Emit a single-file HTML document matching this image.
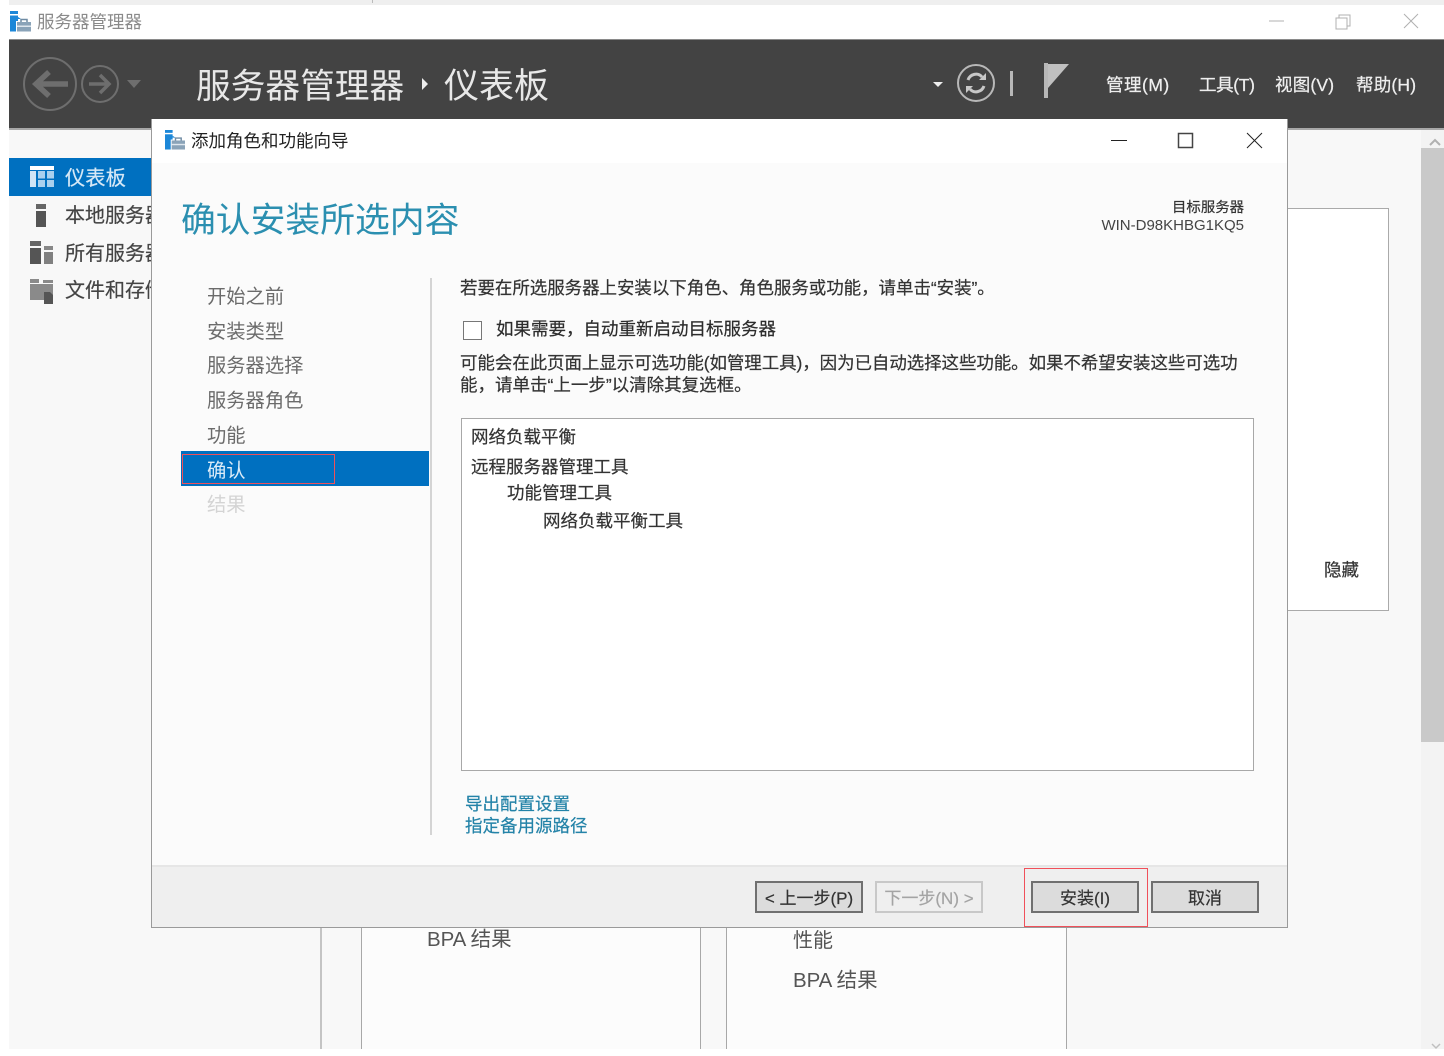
<!DOCTYPE html>
<html lang="zh"><head><meta charset="utf-8"><title>服务器管理器</title>
<style>
html,body{margin:0;padding:0;background:#fff}
#p{position:relative;width:1444px;height:1056px;overflow:hidden;background:#fff;font-family:"Liberation Sans","Noto Sans CJK SC",sans-serif;filter:blur(.35px)}
.b{position:absolute}
.t{position:absolute;white-space:nowrap;height:24px;line-height:24px;font-size:17.5px;color:#333}
.s{-webkit-text-stroke:.2px currentColor}
.n{color:#6b6b6b;font-size:19.3px;left:207px}
.k{letter-spacing:.2px;-webkit-text-stroke:.25px currentColor}
.v{position:absolute;width:1px;background:#a8a8a8;top:928px;height:121px}
.btn{position:absolute;top:881px;width:104px;height:28px;border:2px solid #707070;background:#dcdcdc;text-align:center;line-height:31px;font-size:17px;color:#333;white-space:nowrap;-webkit-text-stroke:.2px currentColor}
svg{position:absolute;overflow:visible}
</style></head><body><div id="p">
<div class="b" style="left:9px;top:0;width:1435px;height:5px;background:#efefef"></div>
<div class="b" style="left:372px;top:0;width:1px;height:3px;background:#bbb"></div>

<svg style="left:10px;top:11px" width="21" height="21" viewBox="0 0 21 21"><rect x="0" y="0" width="8" height="3" fill="#1c87d8"/><rect x="0" y="4.500" width="8" height="16" fill="#1c87d8"/><path d="M8 6l3 2h-3z" fill="#1c87d8"/><rect x="6" y="10" width="15" height="11" fill="#fff"/><rect x="7" y="11" width="14" height="9.500" fill="#8aa3b8"/><path d="M11 11V8.500h6V11" fill="none" stroke="#6f8ba3" stroke-width="1.500"/><rect x="7" y="14.500" width="14" height="1.500" fill="#dfe7ee"/></svg>
<div class="t" style="left:37px;top:10px;color:#8a8a8a">服务器管理器</div>
<svg style="left:1269px;top:13px" width="150" height="18" fill="none" stroke="#b0b0b0"><path d="M0 8h15"/><path d="M67 5h11v11H67zM70 5V2h11v11h-3"/><path d="M135 1l14 14M149 1l-14 14"/></svg>

<div class="b" style="left:9px;top:39px;width:1435px;height:89px;background:#434343;border-top:1px solid #8a8a8a;box-sizing:border-box"></div>
<div class="b" style="left:9px;top:128px;width:1435px;height:2px;background:#a8a8a8"></div>
<div class="b" style="left:9px;top:130px;width:1435px;height:919px;background:#f8f8f8"></div>

<svg style="left:23px;top:57px" width="120" height="55" fill="none" stroke="#6e6e6e"><circle cx="27" cy="27" r="26" stroke-width="2"/><path d="M26 15L13 27l13 12M14 27h31" stroke-width="5.500"/><circle cx="77" cy="27" r="18" stroke-width="2"/><path d="M77 18l9 9-9 9M66 27h19" stroke-width="3.500"/><path d="M104 23h14l-7 8z" fill="#6e6e6e" stroke="none"/></svg>
<div class="t" style="left:196px;top:64px;height:46px;line-height:46px;font-size:34.700px;color:#e8e8e8">服务器管理器</div>
<svg style="left:421px;top:78px" width="8" height="12"><path d="M1 0l6 6-6 6z" fill="#eee"/></svg>
<div class="t" style="left:444px;top:64px;height:46px;line-height:46px;font-size:35px;color:#e8e8e8">仪表板</div>
<svg style="left:933px;top:62px" width="140" height="40" fill="none"><path d="M0 20h10l-5 5z" fill="#eee"/><circle cx="43" cy="21" r="18" stroke="#b8b8b8" stroke-width="2"/><path d="M35 18c2-6 10-8 14-3M51 24c-2 6-10 8-14 3" stroke="#c8c8c8" stroke-width="3"/><path d="M46 18l7 0 0-7zM40 24l-7 0 0 7z" fill="#c8c8c8"/><rect x="77" y="9" width="3" height="25" fill="#b8b8b8"/><rect x="111" y="1" width="4" height="35" fill="#b8b8b8"/><path d="M115 2h21l-21 24z" fill="#c0c0c0"/></svg>
<div class="t k" style="left:1106px;top:73px;color:#eee;letter-spacing:.5px">管理(M)</div>
<div class="t k" style="left:1199px;top:73px;color:#eee;letter-spacing:-.35px">工具(T)</div>
<div class="t k" style="left:1275px;top:73px;color:#eee">视图(V)</div>
<div class="t k" style="left:1356px;top:73px;color:#eee">帮助(H)</div>

<div class="b" style="left:9px;top:158px;width:143px;height:38px;background:#0070c0"></div>
<svg style="left:30px;top:166px" width="24" height="22"><rect width="24" height="4" fill="#fff"/><rect y="5" width="6" height="16" fill="#cfe4f5"/><rect x="8" y="5" width="7" height="7.500" fill="#a9d0ee"/><rect x="17" y="5" width="7" height="7.500" fill="#a9d0ee"/><rect x="8" y="14" width="7" height="7" fill="#a9d0ee"/><rect x="17" y="14" width="7" height="7" fill="#a9d0ee"/></svg>
<div class="t s" style="left:65px;top:167px;font-size:20.300px;color:#d6e8f6">仪表板</div>
<svg style="left:30px;top:204px" width="24" height="100"><rect x="6" y="0" width="10" height="5" fill="#666"/><rect x="6" y="7" width="10" height="16" fill="#555"/><rect x="0" y="37" width="11" height="5" fill="#666"/><rect x="0" y="44" width="11" height="16" fill="#555"/><rect x="14" y="42" width="9" height="4" fill="#888"/><rect x="14" y="48" width="9" height="12" fill="#808080"/><rect x="0" y="75" width="9" height="4" fill="#8a8a8a"/><rect x="0" y="80" width="23" height="16" fill="#8a8a8a"/><rect x="13" y="76" width="10" height="3" fill="#8a8a8a"/><path d="M14 88h6l3 3v9h-9z" fill="#555"/></svg>
<div class="t s" style="left:65px;top:204px;font-size:20px;color:#444">本地服务器</div>
<div class="t s" style="left:65px;top:242px;font-size:20px;color:#444">所有服务器</div>
<div class="t s" style="left:65px;top:279px;font-size:20px;color:#444">文件和存储服务</div>

<div class="b" style="left:1280px;top:208px;width:107px;height:401px;background:#fff;border:1px solid #aaa"></div>
<div class="t s" style="left:1324px;top:558px">隐藏</div>

<div class="b" style="left:1421px;top:130px;width:23px;height:919px;background:#f3f3f3"></div>
<div class="b" style="left:1421px;top:148px;width:23px;height:594px;background:#c9c9c9"></div>
<svg style="left:1429px;top:138px" width="12" height="8" fill="none" stroke="#b0b0b0" stroke-width="2"><path d="M1 7l5-5 5 5"/></svg>
<svg style="left:1431px;top:1043px" width="10" height="6" fill="none" stroke="#c0c0c0" stroke-width="1.500"><path d="M1 1l4 4 4-4"/></svg>

<div class="v" style="left:320px;background:#c4c4c4;width:1.500px"></div>
<div class="v" style="left:361px"></div>
<div class="v" style="left:700px"></div>
<div class="v" style="left:726px"></div>
<div class="v" style="left:1066px"></div>
<div class="b" style="left:362px;top:928px;width:338px;height:121px;background:#fcfcfc"></div>
<div class="b" style="left:727px;top:928px;width:339px;height:121px;background:#fcfcfc"></div>
<div class="t" style="left:427px;top:928px;font-size:20.500px;color:#555;letter-spacing:-.1px">BPA 结果</div>
<div class="t" style="left:793px;top:929px;font-size:20px;color:#555">性能</div>
<div class="t" style="left:793px;top:969px;font-size:20.500px;color:#555;letter-spacing:-.1px">BPA 结果</div>

<!-- dialog -->
<div class="b" style="left:151px;top:119px;width:1137px;height:809px;background:#fbfbfb;border:solid #9a9a9a;border-width:0 1px 1px 1px;box-sizing:border-box"></div>
<div class="b" style="left:152px;top:119px;width:1135px;height:44px;background:#fff"></div>
<svg style="left:165px;top:130px" width="20" height="20" viewBox="0 0 21 21"><rect x="0" y="0" width="8" height="3" fill="#1c87d8"/><rect x="0" y="4.500" width="8" height="16" fill="#1c87d8"/><path d="M8 6l3 2h-3z" fill="#1c87d8"/><rect x="6" y="10" width="15" height="11" fill="#fff"/><rect x="7" y="11" width="14" height="9.500" fill="#8aa3b8"/><path d="M11 11V8.500h6V11" fill="none" stroke="#6f8ba3" stroke-width="1.500"/><rect x="7" y="14.500" width="14" height="1.500" fill="#dfe7ee"/></svg>
<div class="t" style="left:191px;top:129px;color:#222">添加角色和功能向导</div>
<svg style="left:1111px;top:132px" width="154" height="18" fill="none" stroke="#222"><path d="M0 8.500h16"/><path d="M67.500 1.500h14v14h-14z" stroke="#444" stroke-width="1.500"/><path d="M136 1l15 15M151 1l-15 15"/></svg>

<div class="t" style="left:181px;top:198px;height:46px;line-height:46px;font-size:34.800px;color:#2b8fb0">确认安装所选内容</div>
<div class="t s" style="right:200px;top:196px;font-size:14.400px;color:#333">目标服务器</div>
<div class="t" style="right:200px;top:214px;font-size:15px;color:#444">WIN-D98KHBG1KQ5</div>

<div class="t n" style="top:286px">开始之前</div>
<div class="t n" style="top:321px">安装类型</div>
<div class="t n" style="top:355px">服务器选择</div>
<div class="t n" style="top:390px">服务器角色</div>
<div class="t n" style="top:425px">功能</div>
<div class="b" style="left:181px;top:451px;width:248px;height:35px;background:#0070c0"></div>
<div class="b" style="left:182px;top:454px;width:151px;height:28px;border:1.500px solid #f0505a"></div>
<div class="t n" style="top:460px;color:#dcecf8">确认</div>
<div class="t n" style="top:494px;color:#d4d4d4">结果</div>
<div class="b" style="left:430px;top:278px;width:1.500px;height:557px;background:#d4d4d4"></div>

<div class="t s" style="left:460px;top:276px;letter-spacing:-.06px">若要在所选服务器上安装以下角色、角色服务或功能&#xFF0C;请单击“安装”。</div>
<div class="b" style="left:463px;top:321px;width:17px;height:17px;border:1.500px solid #777;background:#fff"></div>
<div class="t s" style="left:496px;top:317px;color:#2c2c2c">如果需要&#xFF0C;自动重新启动目标服务器</div>
<div class="t s" style="left:460px;top:351px;letter-spacing:-.09px">可能会在此页面上显示可选功能(如管理工具)&#xFF0C;因为已自动选择这些功能。如果不希望安装这些可选功</div>
<div class="t s" style="left:460px;top:373px">能&#xFF0C;请单击“上一步”以清除其复选框。</div>

<div class="b" style="left:461px;top:418px;width:791px;height:351px;background:#fff;border:1.500px solid #a8a8a8"></div>
<div class="t s" style="left:471px;top:425px">网络负载平衡</div>
<div class="t s" style="left:471px;top:455px">远程服务器管理工具</div>
<div class="t s" style="left:507px;top:481px">功能管理工具</div>
<div class="t s" style="left:543px;top:509px">网络负载平衡工具</div>
<div class="t s" style="left:465px;top:792px;color:#2483a8">导出配置设置</div>
<div class="t s" style="left:465px;top:814px;color:#2483a8">指定备用源路径</div>

<div class="b" style="left:152px;top:865px;width:1135px;height:62px;background:#efefef;border-top:2px solid #e6e6e6;box-sizing:border-box"></div>
<div class="btn" style="left:755px">&lt; 上一步(P)</div>
<div class="btn" style="left:875px;background:#efefef;border-color:#c8c8c8;color:#a4a4a4">下一步(N) &gt;</div>
<div class="btn" style="left:1031px">安装(I)</div>
<div class="btn" style="left:1151px">取消</div>
<div class="b" style="left:1024px;top:868px;width:122px;height:57px;border:1.500px solid #f0505a"></div>
</div></body></html>
